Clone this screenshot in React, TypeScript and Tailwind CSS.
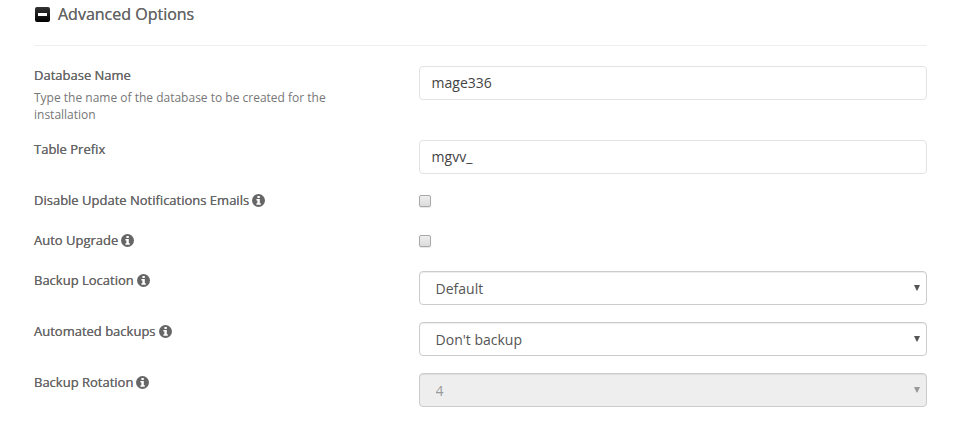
import React, { useState } from 'react';

interface FieldRowProps {
  id: string;
  label: string;
  description?: string;
  info?: boolean;
  children: React.ReactNode;
}

const InfoIcon: React.FC = () => (
  <svg viewBox="0 0 13 13" className="size-[13px] text-[#666]" aria-hidden="true">
    <circle cx="6.5" cy="6.5" r="6.5" fill="currentColor" />
    <path d="M5.4 2h2.4v1.9H5.4zM4.4 5h3.4v4.3h1v1.5H4.4V9.3h1V6.5h-1z" fill="#fff" />
  </svg>
);

const FieldRow: React.FC<FieldRowProps> = ({ id, label, description, info, children }) => (
  <div className="grid grid-cols-12 gap-x-[30px]">
    <div className="col-span-5">
      <label
        htmlFor={id}
        className="flex items-center gap-[3px] text-[13px] leading-[18px] text-[#666] [text-shadow:0_0_0_#666]"
      >
        {label}
        {info && <InfoIcon />}
      </label>
      {description && (
        <p className="mt-[5px] max-w-[300px] text-xs leading-[17px] text-[#777]">{description}</p>
      )}
    </div>
    <div className="col-span-7">{children}</div>
  </div>
);

interface TextFieldProps {
  id: string;
  value: string;
  onChange: (value: string) => void;
}

const TextField: React.FC<TextFieldProps> = ({ id, value, onChange }) => (
  <input
    id={id}
    type="text"
    value={value}
    onChange={(e) => onChange(e.target.value)}
    className="block h-[34px] w-full rounded border border-[#e3e3e3] bg-white px-3 pb-0.5 text-sm text-[#444]"
  />
);

interface SelectFieldProps {
  id: string;
  options: string[];
  disabled?: boolean;
}

const SelectField: React.FC<SelectFieldProps> = ({ id, options, disabled }) => (
  <div className="relative">
    <select
      id={id}
      disabled={disabled}
      className="block h-[34px] w-full appearance-none rounded border border-[#ccc] bg-white px-4 pt-0.5 text-sm text-[#555] shadow-[inset_0_1px_1px_rgba(0,0,0,0.075)] disabled:bg-[#eee] disabled:text-[#999] disabled:opacity-100"
    >
      {options.map((option) => (
        <option key={option}>{option}</option>
      ))}
    </select>
    <svg
      viewBox="0 0 6 6"
      className={`pointer-events-none absolute top-[14px] right-[7px] size-[6px] ${disabled ? 'text-[#999]' : 'text-[#555]'}`}
      aria-hidden="true"
    >
      <path d="M0 0h6L3.4 5.4h-.8z" fill="currentColor" />
    </svg>
  </div>
);

interface CheckFieldProps {
  id: string;
  checked: boolean;
  onChange: (checked: boolean) => void;
}

const CheckField: React.FC<CheckFieldProps> = ({ id, checked, onChange }) => (
  <div className="flex h-[23px] items-start pt-1">
    <input
      id={id}
      type="checkbox"
      checked={checked}
      onChange={(e) => onChange(e.target.checked)}
      className="size-3 appearance-none rounded-xs border border-[#a9a9a9] bg-linear-to-b from-[#eee] to-[#dcdcdc] shadow-[0_1px_1px_rgba(0,0,0,0.1)] checked:bg-[#555] checked:from-[#666] checked:to-[#444]"
    />
  </div>
);

const App: React.FC = () => {
  const [open, setOpen] = useState(true);
  const [databaseName, setDatabaseName] = useState('mage336');
  const [tablePrefix, setTablePrefix] = useState('mgvv_');
  const [disableEmails, setDisableEmails] = useState(false);
  const [autoUpgrade, setAutoUpgrade] = useState(false);

  return (
    <div className="bg-white pr-[43px] pb-9 pl-[34px] font-['Open_Sans','Noto_Sans',sans-serif]">
      <h2 className="border-b border-[#eee] pt-0.5 pb-[19px]">
        <button
          type="button"
          onClick={() => setOpen(!open)}
          aria-expanded={open}
          className="flex items-center gap-2 pl-px text-base leading-6 text-[#666] [text-shadow:0_0_0_#666]"
        >
          <svg viewBox="0 0 15 15" className="size-[15px]" aria-hidden="true">
            <defs>
              <linearGradient id="toggle-fill" x1="0" y1="0" x2="0" y2="1">
                <stop offset="0" stopColor="#333" />
                <stop offset="1" stopColor="#000" />
              </linearGradient>
            </defs>
            <rect width="15" height="15" rx="2" fill="url(#toggle-fill)" />
            <path d={open ? 'M3 6h9v3H3z' : 'M3 6h3V3h3v3h3v3H9v3H6V9H3z'} fill="#fff" />
          </svg>
          Advanced Options
        </button>
      </h2>

      {open && (
        <form className="flex flex-col gap-[17px] pt-5">
          <FieldRow
            id="databaseName"
            label="Database Name"
            description="Type the name of the database to be created for the installation"
          >
            <TextField id="databaseName" value={databaseName} onChange={setDatabaseName} />
          </FieldRow>
          <FieldRow id="tablePrefix" label="Table Prefix">
            <TextField id="tablePrefix" value={tablePrefix} onChange={setTablePrefix} />
          </FieldRow>

          <FieldRow id="disableEmails" label="Disable Update Notifications Emails" info>
            <CheckField id="disableEmails" checked={disableEmails} onChange={setDisableEmails} />
          </FieldRow>
          <FieldRow id="autoUpgrade" label="Auto Upgrade" info>
            <CheckField id="autoUpgrade" checked={autoUpgrade} onChange={setAutoUpgrade} />
          </FieldRow>

          <FieldRow id="backupLocation" label="Backup Location" info>
            <SelectField id="backupLocation" options={['Default']} />
          </FieldRow>
          <FieldRow id="automatedBackups" label="Automated backups" info>
            <SelectField id="automatedBackups" options={["Don't backup", 'Once a day', 'Once a week', 'Once a month']} />
          </FieldRow>
          <FieldRow id="backupRotation" label="Backup Rotation" info>
            <SelectField id="backupRotation" options={['4']} disabled />
          </FieldRow>
        </form>
      )}
    </div>
  );
};

export default App;
